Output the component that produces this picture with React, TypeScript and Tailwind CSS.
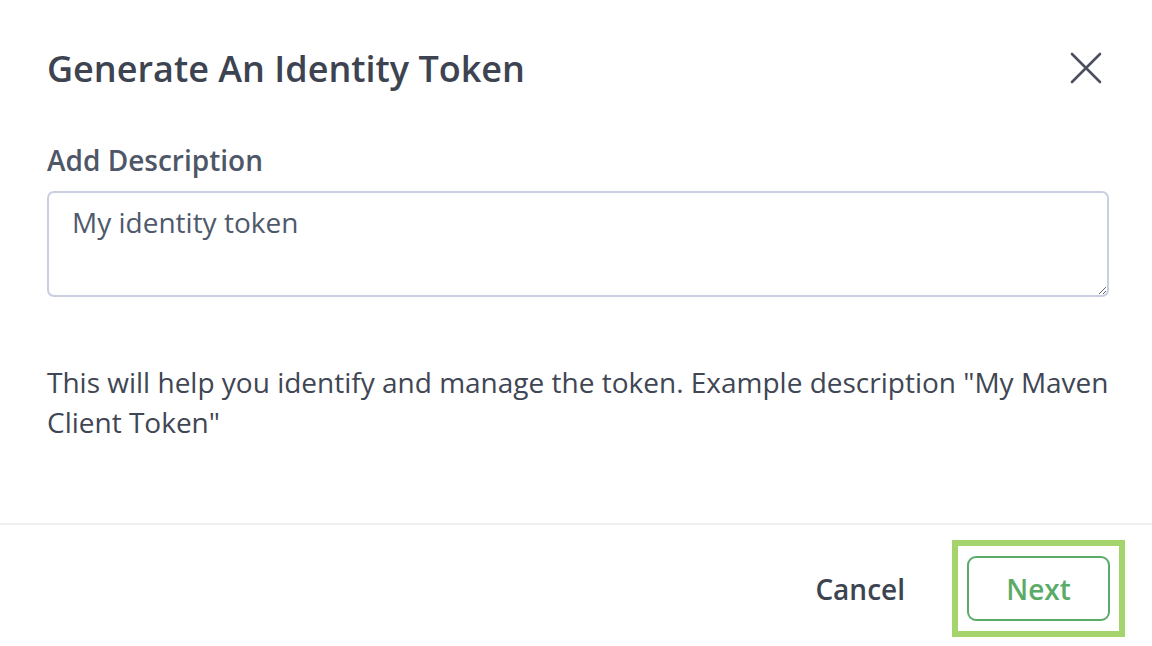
import React from "react"

const CloseIcon = () => (
  <svg width="32" height="32" viewBox="0 0 32 32" fill="none">
    <path d="M2 2 L30 30 M30 2 L2 30" stroke="#4a505e" strokeWidth="2.6" strokeLinecap="round" />
  </svg>
)

const App = () => {
  return (
    <div className="w-[1152px] h-[646px] bg-white flex flex-col font-['Open_Sans',sans-serif] overflow-hidden">
      <div className="flex justify-between items-start pl-[47px] pr-[50px] pt-[45px]">
        <h1 className="text-[36px] leading-[48px] font-semibold text-[#3d4350]">Generate An Identity Token</h1>
        <button className="mt-[7px] p-0">
          <CloseIcon />
        </button>
      </div>
      <div className="pr-[43px] pl-[47px] mt-[47px]">
        <label className="block text-[28px] leading-[40px] font-semibold text-[#4e5768]">Add Description</label>
        <textarea
          defaultValue="My identity token"
          className="mt-[11px] block w-[1062px] h-[106px] border-2 border-[#c9cee0] rounded-[7px] pl-[23px] pt-[9px] text-[28px] leading-[40px] text-[#4f596c] outline-none"
        />
        <p className="mt-[65px] text-[28px] leading-[40px] text-[#3f4654]">
          This will help you identify and manage the token. Example description "My Maven Client Token"
        </p>
      </div>
      <div className="mt-auto border-t-2 border-[#efefef] flex justify-end items-center pr-[27px] pt-[15px] pb-[9px] gap-[47px]">
        <button className="text-[28px] leading-[40px] font-semibold text-[#3d4350]">Cancel</button>
        <div className="border-[6px] border-[#a5d46d] px-[9px] py-[10px]">
          <button className="w-[143px] h-[65px] border-2 border-[#5aab67] rounded-[9px] text-[28px] font-semibold text-[#5aab67]">
            Next
          </button>
        </div>
      </div>
    </div>
  )
}

export default App
